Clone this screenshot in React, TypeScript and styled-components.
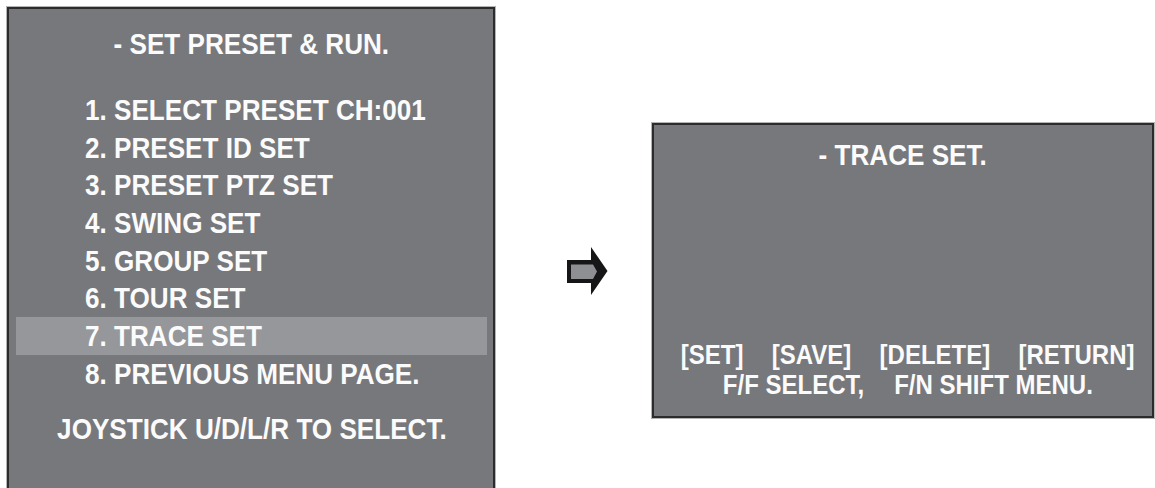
import React from "react";
import styled, { createGlobalStyle } from "styled-components";

const GlobalStyle = createGlobalStyle`
  html, body {
    margin: 0;
    padding: 0;
    background: #ffffff;
    overflow: hidden;
  }
  body {
    font-family: "Liberation Sans", Arial, Helvetica, sans-serif;
  }
`;

const Page = styled.div`
  display: flex;
  align-items: flex-start;
  width: 1155px;
  height: 488px;
  overflow: hidden;
  box-sizing: border-box;
  padding: 7px 0 0 7px;
`;

const Screen = styled.div`
  box-sizing: border-box;
  background: #77787c;
  border: 2px solid #2c2c2c;
  box-shadow: 0 0 0 1px #b4b4b4;
  color: #fbfbfb;
  font-weight: 700;
  display: flex;
  flex-direction: column;
  flex-shrink: 0;
`;

const MenuScreen = styled(Screen)`
  width: 488px;
  height: 530px;
  padding: 16px 6px 0 7px;
`;

const TraceScreen = styled(Screen)`
  width: 502px;
  height: 295px;
  padding: 13px 0 16px;
`;

const Line = styled.div<{ $size: number; $lh: number }>`
  display: flex;
  justify-content: center;
  font-size: ${(p) => p.$size}px;
  line-height: ${(p) => p.$lh}px;
  height: ${(p) => p.$lh}px;
  white-space: nowrap;
`;

const Squeeze = styled.span<{ $scale: number; $origin?: string }>`
  display: inline-flex;
  flex-shrink: 0;
  white-space: nowrap;
  transform: scaleX(${(p) => p.$scale});
  transform-origin: ${(p) => p.$origin ?? "center"};
`;

const KeyRow = styled(Squeeze)<{ $gap: number }>`
  gap: ${(p) => p.$gap}px;
`;

const MenuList = styled.div`
  margin-top: 28.3px;
  display: flex;
  flex-direction: column;
`;

const MenuItem = styled.div<{ $active?: boolean }>`
  height: 37.7px;
  line-height: 37.7px;
  font-size: 30px;
  padding-left: 69px;
  white-space: nowrap;
  background: ${(p) => (p.$active ? "#96979b" : "transparent")};
`;

const Hint = styled(Line)`
  margin-top: 17.4px;
`;

const Footer = styled.div`
  margin-top: auto;
  padding-left: 10px;
  display: flex;
  flex-direction: column;
`;

const Side = styled.div`
  display: flex;
  align-items: center;
  margin-top: 116px;
`;

const ArrowIcon = styled.svg`
  display: block;
  width: 41px;
  height: 48px;
  margin-left: 72px;
  flex-shrink: 0;
`;

const TraceWrap = styled.div`
  margin-left: 44px;
`;

const items = [
  "1. SELECT PRESET CH:001",
  "2. PRESET ID SET",
  "3. PRESET PTZ SET",
  "4. SWING SET",
  "5. GROUP SET",
  "6. TOUR SET",
  "7. TRACE SET",
  "8. PREVIOUS MENU PAGE.",
];

export default function App() {
  return (
    <>
      <GlobalStyle />
      <Page>
        <MenuScreen>
          <Line $size={30} $lh={37.7}>
            <Squeeze $scale={0.87}>- SET PRESET &amp; RUN.</Squeeze>
          </Line>
          <MenuList>
            {items.map((t, i) => (
              <MenuItem key={t} $active={i === 6}>
                <Squeeze $scale={0.87} $origin="left">
                  {t}
                </Squeeze>
              </MenuItem>
            ))}
          </MenuList>
          <Hint $size={30} $lh={37.7}>
            <Squeeze $scale={0.87}>JOYSTICK U/D/L/R TO SELECT.</Squeeze>
          </Hint>
        </MenuScreen>
        <Side>
          <ArrowIcon viewBox="0 0 41 48">
            <path d="M0 13 H24 V0 L40.5 24 L24 48 V36 H0 Z" fill="#161616" />
            <path d="M4 17.5 H26 L30 24.5 L26 32 H4 Z" fill="#8e8f93" />
          </ArrowIcon>
          <TraceWrap>
            <TraceScreen>
              <Line $size={30} $lh={34}>
                <Squeeze $scale={0.87}>- TRACE SET.</Squeeze>
              </Line>
              <Footer>
                <Line $size={28} $lh={30}>
                  <KeyRow $scale={0.857} $gap={33}>
                    <span>[SET]</span>
                    <span>[SAVE]</span>
                    <span>[DELETE]</span>
                    <span>[RETURN]</span>
                  </KeyRow>
                </Line>
                <Line $size={28} $lh={30}>
                  <KeyRow $scale={0.857} $gap={35}>
                    <span>F/F SELECT,</span>
                    <span>F/N SHIFT MENU.</span>
                  </KeyRow>
                </Line>
              </Footer>
            </TraceScreen>
          </TraceWrap>
        </Side>
      </Page>
    </>
  );
}
